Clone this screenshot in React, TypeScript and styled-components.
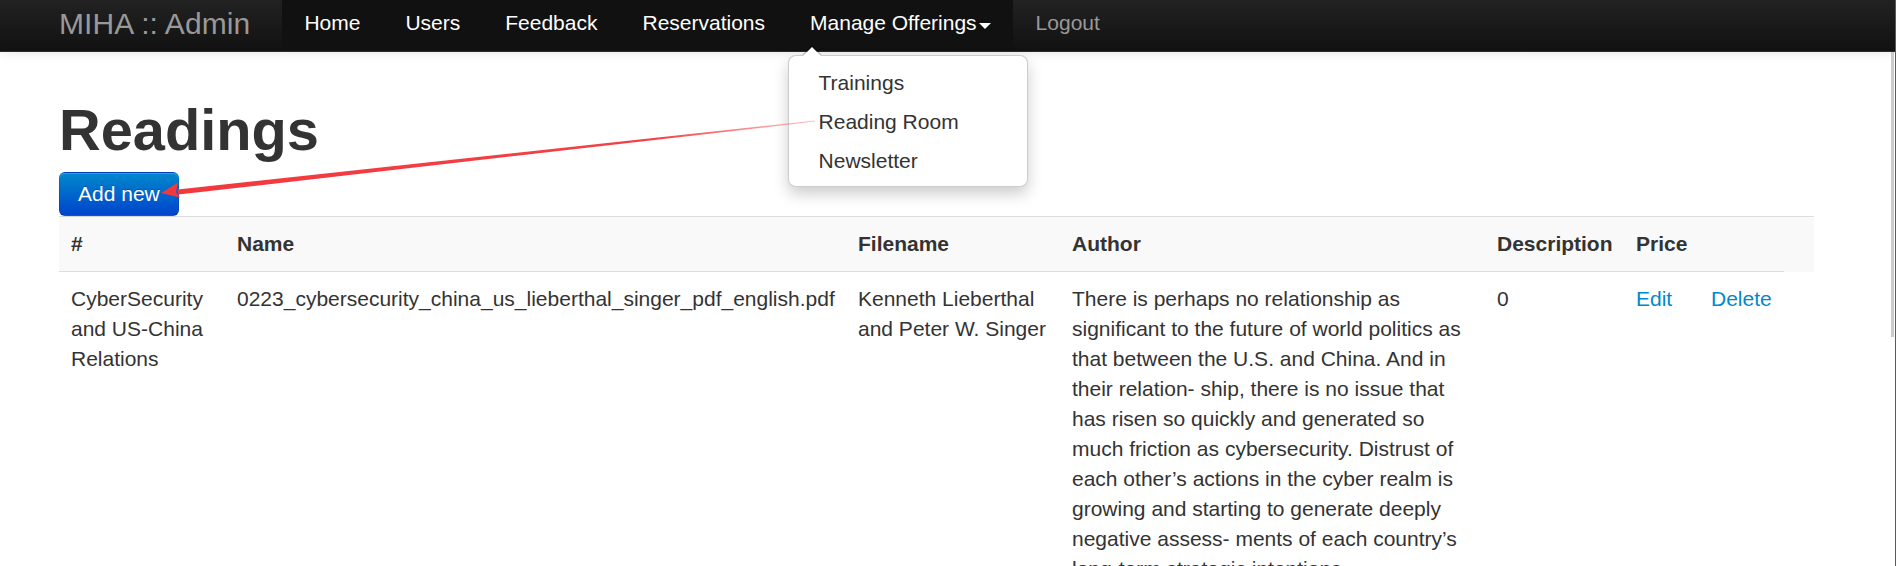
import React from "react";
import styled, { createGlobalStyle } from "styled-components";

const Global = createGlobalStyle`
  html, body { margin: 0; padding: 0; background: #fff; overflow: hidden; }
  body {
    font-family: "Liberation Sans", Helvetica, Arial, sans-serif;
    font-size: 21px;
    line-height: 30px;
    color: #333;
  }
  #root { width: 1896px; height: 566px; position: relative; overflow: hidden; }
`;

const NavBar = styled.header`
  position: relative;
  z-index: 10;
  box-sizing: border-box;
  height: 52px;
  display: flex;
  align-items: stretch;
  padding-left: 29px;
  background: linear-gradient(#222222, #111111);
  border-bottom: 1px solid #2a2a2a;
  box-shadow: 0 1px 10px rgba(0, 0, 0, 0.1);
`;

const Brand = styled.a`
  display: block;
  padding: 9px 31.5px 0 30px;
  font-size: 30px;
  line-height: 30px;
  font-weight: 200;
  letter-spacing: 0.1px;
  color: #999;
  text-decoration: none;
  white-space: nowrap;
`;

const NavList = styled.ul`
  display: flex;
  margin: 0;
  padding: 0;
  list-style: none;
`;

const NavItem = styled.li`
  position: relative;
  display: flex;
`;

const NavLink = styled.a<{ $active?: boolean }>`
  display: block;
  padding: 8px 22.5px 13px;
  font-size: 21px;
  line-height: 30px;
  white-space: nowrap;
  text-decoration: none;
  color: ${(p) => (p.$active ? "#fff" : "#999")};
  background: ${(p) => (p.$active ? "#111" : "transparent")};
`;

const Caret = styled.span`
  display: inline-block;
  vertical-align: top;
  width: 0;
  height: 0;
  margin: 15px 0 0 2px;
  border-top: 6px solid #fff;
  border-left: 6px solid transparent;
  border-right: 6px solid transparent;
`;

const Menu = styled.ul`
  position: absolute;
  top: 55px;
  left: 0;
  z-index: 20;
  box-sizing: border-box;
  min-width: 240px;
  margin: 0;
  padding: 7.5px 0 5.5px;
  list-style: none;
  background: #fff;
  border: 1px solid rgba(0, 0, 0, 0.2);
  border-radius: 8px;
  box-shadow: 0 7px 15px rgba(0, 0, 0, 0.2);

  &::before,
  &::after {
    content: "";
    position: absolute;
    width: 0;
    height: 0;
    border-left: 10.5px solid transparent;
    border-right: 10.5px solid transparent;
  }
  &::before {
    top: -11px;
    left: 13px;
    border-bottom: 10.5px solid rgba(0, 0, 0, 0.2);
  }
  &::after {
    top: -9.5px;
    left: 14.5px;
    border-left-width: 9px;
    border-right-width: 9px;
    border-bottom: 9.5px solid #fff;
  }
`;

const MenuLink = styled.a`
  display: block;
  padding: 4.5px 30px;
  font-size: 21px;
  line-height: 30px;
  color: #333;
  text-decoration: none;
  white-space: nowrap;
`;

const Main = styled.main`
  padding: 48px 0 0 59px;
`;

const Title = styled.h1`
  margin: 0;
  font-size: 57.75px;
  line-height: 60px;
  font-weight: bold;
  color: #333;
`;

const Toolbar = styled.div`
  display: flex;
  margin-top: 12px;
`;

const PrimaryButton = styled.button`
  font-family: inherit;
  font-size: 21px;
  line-height: 30px;
  padding: 6px 18px;
  color: #fff;
  text-shadow: 0 -1px 0 rgba(0, 0, 0, 0.25);
  background: linear-gradient(#0088cc, #0044cc);
  border: 1px solid;
  border-color: rgba(0, 0, 0, 0.1) rgba(0, 0, 0, 0.1) rgba(0, 0, 0, 0.25);
  border-radius: 6px;
  box-shadow: inset 0 1px 0 rgba(255, 255, 255, 0.2), 0 1px 2px rgba(0, 0, 0, 0.05);
  cursor: pointer;
`;

const Table = styled.table`
  width: 1755px;
  table-layout: fixed;
  border-collapse: collapse;
  border-spacing: 0;
`;

const HeadCell = styled.th`
  padding: 12px;
  text-align: left;
  vertical-align: bottom;
  font-weight: bold;
  line-height: 30px;
  background: #f9f9f9;
  border-top: 1px solid #ddd;
  white-space: nowrap;
`;

const Cell = styled.td<{ $nowrap?: boolean }>`
  padding: 12px;
  text-align: left;
  vertical-align: top;
  line-height: 30px;
  border-top: 1px solid #ddd;
  white-space: ${(p) => (p.$nowrap ? "nowrap" : "normal")};
`;

const ActionLink = styled.a`
  color: #0088cc;
  text-decoration: none;
`;

const Overlay = styled.svg`
  position: absolute;
  top: 0;
  left: 0;
  z-index: 50;
  pointer-events: none;
`;

const ScrollTrack = styled.div`
  position: absolute;
  top: 0;
  right: 0;
  z-index: 60;
  width: 6px;
  height: 566px;
  border-right: 1px solid #5a5a5a;
  box-sizing: border-box;
`;

const ScrollThumb = styled.div`
  position: absolute;
  top: 52px;
  left: 1px;
  width: 3px;
  height: 285px;
  background: #cbcbcb;
`;

const columns = [166, 621, 214, 425, 139, 75, 85, 30];
const headers = ["#", "Name", "Filename", "Author", "Description", "Price", "", ""];

const description =
  "There is perhaps no relationship as significant to the future of world politics as that between the U.S. and China. And in their relation- ship, there is no issue that has risen so quickly and generated so much friction as cybersecurity. Distrust of each other\u2019s actions in the cyber realm is growing and starting to generate deeply negative assess- ments of each country\u2019s long-term strategic intentions.";

export default function App() {
  return (
    <>
      <Global />
      <NavBar>
        <Brand href="#">MIHA :: Admin</Brand>
        <NavList>
          <NavItem><NavLink $active href="#">Home</NavLink></NavItem>
          <NavItem><NavLink $active href="#">Users</NavLink></NavItem>
          <NavItem><NavLink $active href="#">Feedback</NavLink></NavItem>
          <NavItem><NavLink $active href="#">Reservations</NavLink></NavItem>
          <NavItem>
            <NavLink $active href="#">
              Manage Offerings<Caret />
            </NavLink>
            <Menu>
              <li><MenuLink href="#">Trainings</MenuLink></li>
              <li><MenuLink href="#">Reading Room</MenuLink></li>
              <li><MenuLink href="#">Newsletter</MenuLink></li>
            </Menu>
          </NavItem>
          <NavItem><NavLink href="#">Logout</NavLink></NavItem>
        </NavList>
      </NavBar>

      <Main>
        <Title>Readings</Title>
        <Toolbar>
          <PrimaryButton type="button">Add new</PrimaryButton>
        </Toolbar>
        <Table>
          <colgroup>
            {columns.map((w, i) => (
              <col key={i} style={{ width: w }} />
            ))}
          </colgroup>
          <thead>
            <tr>
              {headers.map((h, i) => (
                <HeadCell key={i}>{h}</HeadCell>
              ))}
            </tr>
          </thead>
          <tbody>
            <tr>
              <Cell>CyberSecurity and US-China Relations</Cell>
              <Cell $nowrap>0223_cybersecurity_china_us_lieberthal_singer_pdf_english.pdf</Cell>
              <Cell>Kenneth Lieberthal and Peter W. Singer</Cell>
              <Cell>{description}</Cell>
              <Cell>0</Cell>
              <Cell><ActionLink href="#">Edit</ActionLink></Cell>
              <Cell><ActionLink href="#">Delete</ActionLink></Cell>
            </tr>
          </tbody>
        </Table>
      </Main>

      <Overlay width="1896" height="566" viewBox="0 0 1896 566">
        <defs>
          <linearGradient id="arrowFade" x1="178" y1="192" x2="815" y2="121" gradientUnits="userSpaceOnUse">
            <stop offset="0" stopColor="#f2383d" stopOpacity="1" />
            <stop offset="0.75" stopColor="#f2383d" stopOpacity="0.95" />
            <stop offset="1" stopColor="#f2383d" stopOpacity="0.3" />
          </linearGradient>
        </defs>
        <polygon
          points="178.3,194.6 177.7,189.4 814.9,120.4 815.1,121.6"
          fill="url(#arrowFade)"
        />
        <polygon points="161,193 178,182.5 176,192 180,197.5" fill="#f2383d" />
      </Overlay>

      <ScrollTrack>
        <ScrollThumb />
      </ScrollTrack>
    </>
  );
}
